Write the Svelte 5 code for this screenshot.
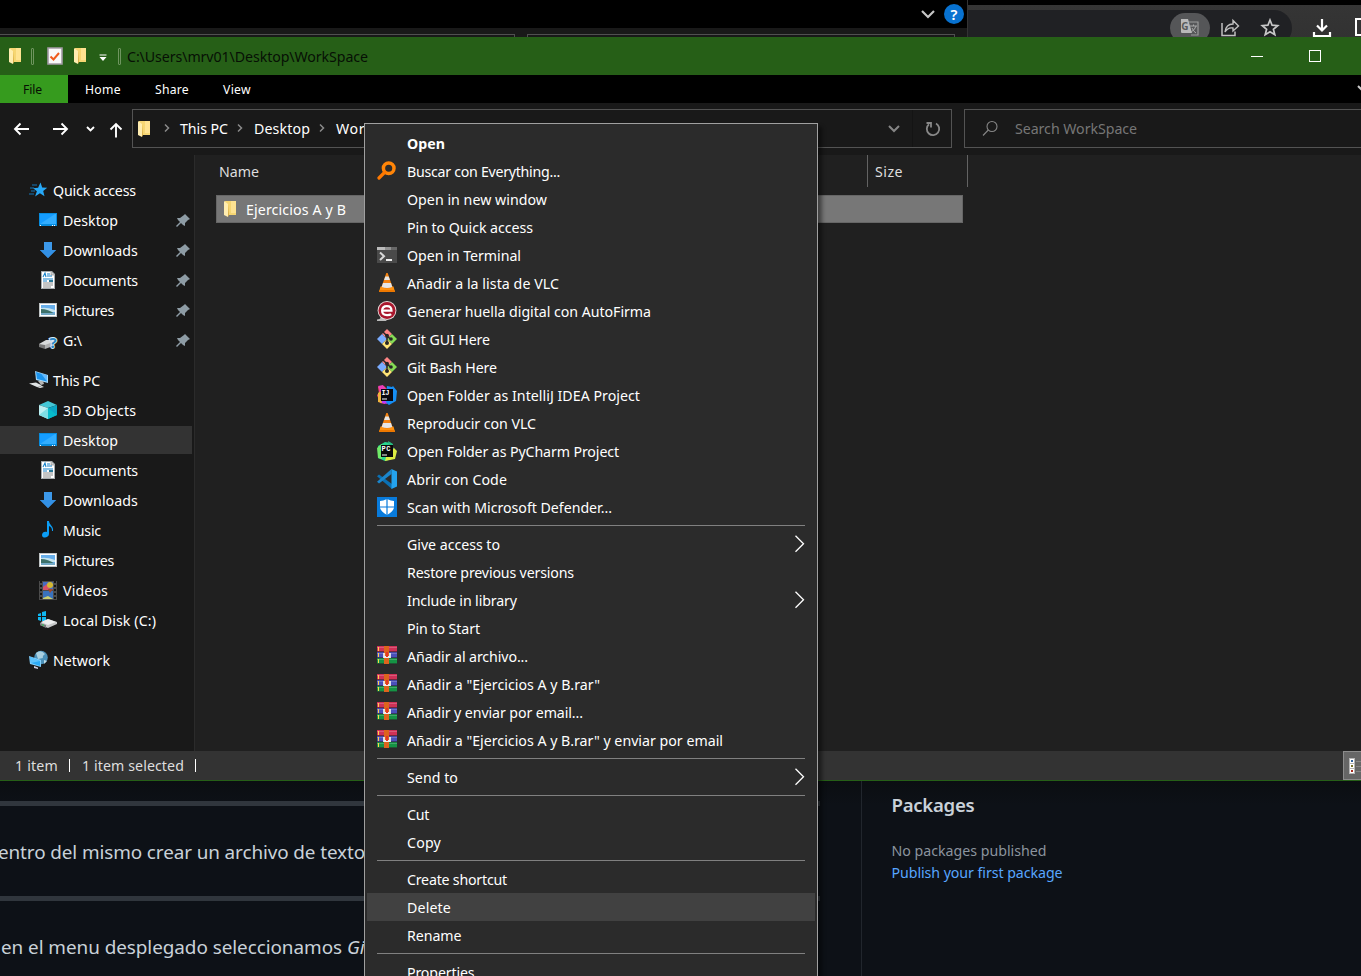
<script>
  // Spreads the letters of a label evenly over the given width.
  function fit(node, width) {
    const n = node.textContent.length;
    const natural = node.getBoundingClientRect().width;
    if (width && n > 1) node.style.letterSpacing = `${(width - natural) / n}px`;
  }

  const icons = {
    folder: `<path d="M3 1h11v14H3z" fill="#f6d673"/><path d="M9 1h5v12H9z" fill="#ffe391"/><path d="M2 1l4 3v13l-4-2z" fill="#ffedb0"/><path d="M6 4l1 11-1 2z" fill="#d8ad45"/>`,
    star: `<path d="M11.500 2.500l1.700 5 5 .2-4 3.300 1.300 5.300-4.600-3L6.100 16.500l1.800-5.200-3.800-3 5 -.5z" fill="#27a8f6"/><path d="M3 5h5M1 8h4M2 11h4M0 14h5" stroke="#1477b8" stroke-width="1"/>`,
    desktop: `<path d="M1 3h18v13H1z" fill="#078bdd"/><path d="M2 4h16v10H2z" fill="#159cff"/><path d="M2 14L17 4h1v10z" fill="#32adff"/><path d="M2 15.500h1M14 15.500h1M16 15.500h1" stroke="#fff"/>`,
    down: `<path d="M6 2h8v8h4l-8 8-8-8h4z" fill="#3c98e8"/><path d="M2 10h16l-8 8z" fill="#3290e5"/>`,
    doc: `<path d="M3 1h11l3 3v15H3z" fill="#a7abad"/><path d="M4 2h9l3 3v13H4z" fill="#fff"/><path d="M13 2v3h3" fill="#ccc" stroke="#888" stroke-width=".6"/><path d="M5 7l2-4 1 4M9 4h3M9 6h5M5 9h10M5 11h4M11 11h4" stroke="#1682ca" stroke-width="1.1" fill="none"/><path d="M5 13h10M5 15h10M5 17h8" stroke="#8b8b8b"/><path d="M11 10h4v2h-4z" fill="#287797"/>`,
    picture: `<path d="M1 3h18v14H1z" fill="#bfc3c4"/><path d="M2 4h16v12H2z" fill="#fff"/><path d="M3 5h14v10H3z" fill="#67aeea"/><path d="M3 8q6-1 14 2v2H3z" fill="#c5e4ef"/><path d="M3 9q7 0 14 5H3z" fill="#3d716a"/><path d="M3 13h14v2H3z" fill="#73a9c6"/>`,
    drive: `<path d="M1 14l7-4h8l-1 4-7 4-7-2z" fill="#d8dada"/><path d="M1 14l6 1v4l-6-2z" fill="#777"/><path d="M7 15l8-3v4l-8 3z" fill="#b0b1b1"/><text x="11.500" y="18" font-size="15" font-weight="700" fill="#2b86c4" stroke="#d7ecfa" stroke-width="1.800" paint-order="stroke" font-family="Noto Sans">?</text>`,
    pc: `<path d="M6 1l13 4v8L7 10z" fill="#a5d8f9"/><path d="M7 2l11 3.500v6L8 9z" fill="#1c94ed"/><path d="M12 3.500l6 2v6z" fill="#63baff"/><path d="M9 11h5l1 3-3 1z" fill="#b5b5b5"/><path d="M0 13.500l7-1 6 3-5 1.500zM8 17l5-1 2 1-4 1z" fill="#dfe3e4"/>`,
    cube: `<path d="M1 5l9-4 9 4-9 3z" fill="#44c7d6"/><path d="M1 5l9 3v11l-9-4z" fill="#bceff2"/><path d="M10 8l9-3v10l-9 4z" fill="#0ba6c5"/><path d="M10 8l9 7-9 4z" fill="#07bbca"/><path d="M1 15l9-7v11z" fill="#7edee4"/>`,
    music: `<path d="M9 1h2c0 4 5 5 4 10h-1c0-3-1-4-3-5v8c0 4-7 5-7 1 0-3 3-4 5-3z" fill="#0b9df5"/>`,
    video: `<path d="M1 1h18v19H1z" fill="#4c4c4c"/><path d="M3 1v19M17 1v19" stroke="#151515" stroke-width="2" stroke-dasharray="2 2"/><path d="M5 2h10v8H5z" fill="#456cc1"/><path d="M5 11h10v8H5z" fill="#3972bd"/><path d="M5 7l4-3 3 5v1H5z" fill="#d55268"/><circle cx="12" cy="5" r="3" fill="#d5b831"/><path d="M10 9h5l-3 4z" fill="#a4472a"/><path d="M5 18l5-2 5 3H5z" fill="#c9ce71"/>`,
    disk: `<path d="M0 4l3-1v3H0zM4 2l4-1v5H4zM0 7h3v4l-3-1zM4 7h4v4H4z" fill="#10b8f2"/><path d="M2 13l8-4 9 3v2l-9 4-8-3z" fill="#c5c7c8"/><path d="M3 12l7-3 8 3-8 3z" fill="#edeeef"/><path d="M2 13l6 2v3l-6-3z" fill="#777b7d"/><path d="M4 15h2" stroke="#2dd258"/>`,
    network: `<circle cx="12" cy="7.500" r="6.800" fill="#4b90b8"/><path d="M7 3q5-4 9 1-3 2-2 4l-5 1z" fill="#a8cfe0"/><path d="M15 10l3 1-3 3z" fill="#bbdae7"/><path d="M0 6l12 4v7L1 14z" fill="#80cffd"/><path d="M1 7l10 4v5L2 13z" fill="#2babf7"/><path d="M1 7l10 4-9 2z" fill="#5fc2fb"/><path d="M5 16l4 1.500v1.500l-4-1z" fill="#ccd"/>`,
    pin: `<path d="M9 1l5 5-2 1-3 3 0 3-2-1-2-2-4 4-1-1 4-4-2-2-1-2h3l4-3z" fill="#8e9ca5"/>`,
    search: `<circle cx="11.700" cy="7.200" r="5.300" fill="none" stroke="#ff8508" stroke-width="3.500"/><path d="M8 11l-6 6" stroke="#ff7900" stroke-width="3.200" stroke-linecap="round"/>`,
    terminal: `<path d="M0 2h20v16H0z" fill="#4a4a4a"/><path d="M0 2h20v3H0z" fill="#919191"/><path d="M0 2h8v3H0z" fill="#bbb"/><path d="M14 2h6v3h-6z" fill="#686868"/><path d="M3 7.500l4 3.700L3 15" fill="none" stroke="#d7d7d7" stroke-width="2"/><path d="M9 15h6" stroke="#eee" stroke-width="2"/>`,
    vlc: `<path d="M3.500 13.500h13l1.500 5.500H2z" fill="#ff9210"/><path d="M9.300 0h1.400l4.800 14q-5.500 3-11 0z" fill="#f58310"/><path d="M8.300 3.500h3.400l1.200 3.500H7.100zM6 10h8l1.300 4Q10 16 4.700 14z" fill="#e6e6e6"/><path d="M2.500 17h15l.5 2H2z" fill="#ed7800"/>`,
    firma: `<path d="M0 20v-1.500q3 0 5-3l5 4.500z" fill="#bbb"/><circle cx="10" cy="9.500" r="9.400" fill="#e9dcdc"/><circle cx="10" cy="9.500" r="8.500" fill="#a9172d"/><path d="M5.500 9.700h9q0-4.500-4.600-4.500-4.800 0-4.800 4.600 0 4.300 5 4.300 3 0 4-1" fill="none" stroke="#fff" stroke-width="2.200"/>`,
    git: `<path d="M10 0l5 5-5 5-5-5z" fill="#ff8585"/><path d="M5 5l5 5-5 5-5-5z" fill="#7aacff"/><path d="M15 5l5 5-5 5-5-5z" fill="#86dc55"/><path d="M10 10l5 5-5 5-5-5z" fill="#ffe477"/><path d="M5.500 2.500l4 4M10 7v7M10 7l4 3.500" stroke="#262626" stroke-width="1.500"/><g fill="#262626"><circle cx="10" cy="6.800" r="2"/><circle cx="14" cy="10" r="1.800"/><circle cx="10" cy="14" r="2"/></g>`,
    idea: `<path d="M1 2l6-1 4 4-3 14-5-1-3-8 2-2z" fill="#f74474"/><path d="M1 8l4-3v13l-4-1z" fill="#f0b43d"/><path d="M1 1l5-1 3 5-5 3z" fill="#ec3eb9"/><path d="M10 1l5 1 1-1 4 5-1 10-7 4-4-3z" fill="#168ef5"/><path d="M4 12l3-1 3 8-5-1z" fill="#bb3bf6"/><path d="M4 4h12v12H4z" fill="#090810"/><text x="4.500" y="10" font-size="7" font-weight="700" textLength="8" fill="#fff" font-family="Liberation Mono">IJ</text><path d="M5 14h5" stroke="#fff"/>`,
    pycharm: `<path d="M1 5l7-4 6 1 4 8-3 8-7 2-7-3z" fill="#29d58f"/><path d="M13 12l4-5 3 3-2 8-10 2 1-4z" fill="#dcec42"/><path d="M0 7l5-4v15l-4-1z" fill="#70eb68"/><path d="M11 0l5 3 0 5-4-3z" fill="#27bd83"/><path d="M4 4h12v12H4z" fill="#090a0b"/><text x="4.500" y="10" font-size="7" font-weight="700" textLength="9" fill="#fff" font-family="Liberation Mono">PC</text><path d="M5 14h5" stroke="#fff"/>`,
    code: `<path d="M2 5.500L15 15v5L0 7.300z" fill="#0a70b4"/><path d="M14.500 0v5L2 14.500l-2-1.800z" fill="#1b86cc"/><path d="M14.500 0L20 2.500v15L14.500 20z" fill="#24a3ee"/>`,
    defender: `<path d="M0 0h20v20H0z" fill="#087bdc"/><path d="M10 2q4 2 7 2v6q0 4-7 8-7-4-7-8V4q3 0 7-2z" fill="#fff"/><path d="M10 2v16M3 10h14" stroke="#087bdc" stroke-width="1.200"/>`,
    rar: `<path d="M0 0h20v6H0z" fill="#cf3157"/><path d="M0 6h20v6H0z" fill="#4a50ba"/><path d="M0 12h20v6H0z" fill="#159344"/><path d="M0 1.500h20M0 7.500h20M0 13.500h20" stroke="#fff" opacity=".2"/><path d="M0 5.700h20M0 11.700h20M0 17.700h20" stroke="#2b2329" stroke-width=".7"/><path d="M7 0h5v18H7z" fill="#dd641d"/><path d="M1.500 1v4M1.500 7v4M1.500 13v4" stroke="#ffd24b"/><path d="M7 7v4h6V7" fill="none" stroke="#eee" stroke-width="1.800"/><path d="M10 6v5" stroke="#e53627" stroke-width="2"/>`,
  };

  const sep = { sep: true };
  const menu = [
    { t: 'Open', w: 38, bold: true },
    { t: 'Buscar con Everything...', w: 153, i: 'search' },
    { t: 'Open in new window', w: 140 },
    { t: 'Pin to Quick access', w: 126 },
    { t: 'Open in Terminal', w: 114, i: 'terminal' },
    { t: 'Añadir a la lista de VLC', w: 152, i: 'vlc' },
    { t: 'Generar huella digital con AutoFirma', w: 244, i: 'firma' },
    { t: 'Git GUI Here', w: 83, i: 'git' },
    { t: 'Git Bash Here', w: 90, i: 'git' },
    { t: 'Open Folder as IntelliJ IDEA Project', w: 233, i: 'idea' },
    { t: 'Reproducir con VLC', w: 129, i: 'vlc' },
    { t: 'Open Folder as PyCharm Project', w: 212, i: 'pycharm' },
    { t: 'Abrir con Code', w: 100, i: 'code' },
    { t: 'Scan with Microsoft Defender...', w: 205, i: 'defender' },
    sep,
    { t: 'Give access to', w: 93, sub: true },
    { t: 'Restore previous versions', w: 167 },
    { t: 'Include in library', w: 110, sub: true },
    { t: 'Pin to Start', w: 73 },
    { t: 'Añadir al archivo...', w: 121, i: 'rar' },
    { t: 'Añadir a "Ejercicios A y B.rar"', w: 193, i: 'rar' },
    { t: 'Añadir y enviar por email...', w: 176, i: 'rar' },
    { t: 'Añadir a "Ejercicios A y B.rar" y enviar por email', w: 316, i: 'rar' },
    sep,
    { t: 'Send to', w: 51, sub: true },
    sep,
    { t: 'Cut', w: 22 },
    { t: 'Copy', w: 34 },
    sep,
    { t: 'Create shortcut', w: 100 },
    { t: 'Delete', w: 44, hot: true },
    { t: 'Rename', w: 54.5 },
    sep,
    { t: 'Properties', w: 67.5 },
  ];

  const tree = [
    { t: 'Quick access', w: 83, i: 'star', root: true },
    { t: 'Desktop', w: 55, i: 'desktop', pin: true },
    { t: 'Downloads', w: 75, i: 'down', pin: true },
    { t: 'Documents', w: 75, i: 'doc', pin: true },
    { t: 'Pictures', w: 51, i: 'picture', pin: true },
    { t: 'G:\\', w: 19, i: 'drive', pin: true },
    { t: 'This PC', w: 47, i: 'pc', root: true },
    { t: '3D Objects', w: 73, i: 'cube' },
    { t: 'Desktop', w: 55, i: 'desktop', on: true },
    { t: 'Documents', w: 75, i: 'doc' },
    { t: 'Downloads', w: 75, i: 'down' },
    { t: 'Music', w: 38, i: 'music' },
    { t: 'Pictures', w: 51, i: 'picture' },
    { t: 'Videos', w: 45, i: 'video' },
    { t: 'Local Disk (C:)', w: 93, i: 'disk' },
    { t: 'Network', w: 57, i: 'network', root: true },
  ];
</script>

{#snippet icon(name, size = 20)}
  <svg class="icon" width={size} height={size} viewBox="0 0 20 20">{@html icons[name]}</svg>
{/snippet}

{#snippet folder()}
  <svg class="icon" width="16" height="18" viewBox="0 0 16 18">{@html icons.folder}</svg>
{/snippet}

{#snippet chevron()}
  <svg class="crumb-sep" width="8" height="12" viewBox="0 0 8 12"><path d="M2 1.5L5.5 5 2 8.5" fill="none" stroke="#8a8a8a" stroke-width="1.5" /></svg>
{/snippet}

<div class="screen">
  <div class="back-window">
    <div class="back-ribbon">
      <svg width="16" height="12" viewBox="0 0 16 12"><path d="M2 2l6 6 6-6" fill="none" stroke="#c6c6c6" stroke-width="2.2" /></svg>
      <span class="help">?</span>
    </div>
    <div class="back-fields"><i></i><i></i></div>
  </div>

  <div class="browser">
    <div class="omnibox">
      <span class="translate">
        <svg width="20" height="20" viewBox="0 0 20 20"><path d="M7 4h11v13h-7" fill="none" stroke="#9b9b9b" stroke-width="1.2" /><path d="M1 1h7l4 14H2q-1 0-1-1z" fill="#b9b9b9" /><text x="1.3" y="12" font-size="10" font-weight="700" fill="#58595b" font-family="Noto Sans">G</text><path d="M10 8h7M13.5 6.5V8M16 8q-1 4-5 6M12 10q2 4 4 5" fill="none" stroke="#a9a9a9" /></svg>
      </span>
      <svg width="20" height="20" viewBox="0 0 20 20"><path d="M2 5v12.500h13v-4" fill="none" stroke="#c0c0c0" stroke-width="1.5" /><path d="M5 14q1-8 8-8V2.500L18.500 8 13 13V10q-5-1-8 4z" fill="none" stroke="#c0c0c0" stroke-width="1.4" /></svg>
      <svg width="20" height="20" viewBox="0 0 20 20"><path d="M10 2l2.1 5.2 5.6.5-4.3 3.6 1.4 5.4L10 13.7l-4.8 3 1.4-5.4-4.3-3.6 5.6-.5z" fill="none" stroke="#c8c8c8" stroke-width="1.7" /></svg>
    </div>
    <svg class="dl" width="20" height="20" viewBox="0 0 20 20"><path d="M10 1v11M5 7.500l5 5 5-5M2 14v4h16v-4" fill="none" stroke="#fff" stroke-width="2.2" /></svg>
    <span class="panel-icon"></span>
  </div>

  <div class="page">
    <div class="readme">
      <hr />
      <p><span use:fit={367}>entro del mismo crear un archivo de texto</span></p>
      <hr />
      <p class="second"><span use:fit={341}>en el menu desplegado seleccionamos</span><em>Git</em></p>
    </div>
    <aside>
      <h2><span use:fit={83}>Packages</span></h2>
      <div><span use:fit={155}>No packages published</span></div>
      <div class="link"><span use:fit={171}>Publish your first package</span></div>
    </aside>
  </div>

  <div class="explorer">
    <header>
      {@render folder()}
      <i class="bar b1"></i>
      <svg class="check" width="16" height="18" viewBox="0 0 16 18"><path d="M1 1h14v16H1z" fill="#f8f8f8" stroke="#a29aa5" stroke-width="1.6" /><path d="M3.5 9.5l3 3L12 6" fill="none" stroke="#ef5a1b" stroke-width="2" /></svg>
      <span class="f2">{@render folder()}</span>
      <svg class="drop" width="8" height="8" viewBox="0 0 8 8"><path d="M.5 1h7" stroke="#fff" /><path d="M.5 3h7L4 7z" fill="#fff" /></svg>
      <i class="bar b2"></i>
      <span class="path" use:fit={241}>C:\Users\mrv01\Desktop\WorkSpace</span>
      <i class="min"></i>
      <i class="max"></i>
    </header>
    <nav class="ribbon">
      <span class="file"><b use:fit={19}>File</b></span>
      <span class="home"><b use:fit={36}>Home</b></span>
      <span class="share"><b use:fit={34}>Share</b></span>
      <span class="view"><b use:fit={28}>View</b></span>
      <svg class="expand" width="4" height="8" viewBox="0 0 4 8"><path d="M1 1l5 5" stroke="#ccc" stroke-width="2" /></svg>
    </nav>
    <div class="nav">
      <div class="arrows">
        <svg width="132" height="40" viewBox="0 0 132 40" fill="none" stroke="#fff" stroke-width="1.9">
          <path d="M29 20H15M20.5 14.5L15 20l5.500 5.500M53 20h14M61.500 14.500L67 20l-5.500 5.500" />
          <path d="M87 18l3.500 3.500L94 18" /><path d="M116 28.500V15M110.500 20.500L116 15l5.500 5.500" />
        </svg>
      </div>
      <div class="address">
        {@render folder()}
        <span class="s1">{@render chevron()}</span><span class="c1" use:fit={48}>This PC</span>
        <span class="s2">{@render chevron()}</span><span class="c2" use:fit={56}>Desktop</span>
        <span class="s2">{@render chevron()}</span><span class="c3" use:fit={80}>WorkSpace</span>
        <svg class="history" width="14" height="10" viewBox="0 0 14 10"><path d="M2 2l5 5 5-5" fill="none" stroke="#858585" stroke-width="2" /></svg>
        <span class="refresh"><svg width="16" height="18" viewBox="0 0 16 18"><path d="M11 3.500A6.200 6.200 0 1 1 4 4.200M1.500 3h4.500v4.500" fill="none" stroke="#888" stroke-width="1.800" /></svg></span>
      </div>
      <div class="find">
        <svg width="18" height="18" viewBox="0 0 18 18"><circle cx="11" cy="6.500" r="5" fill="none" stroke="#868686" stroke-width="1.100" /><path d="M7.300 10L2 15.500" stroke="#868686" stroke-width="1.100" /></svg>
        <span use:fit={122}>Search WorkSpace</span>
      </div>
    </div>
    <div class="body">
      <div class="tree">
        {#each tree as r, k}
          <div class="node" class:root={r.root} class:on={r.on} class:gap={r.root && k > 0}>
            {@render icon(r.i)}
            <span use:fit={r.w}>{r.t}</span>
            {#if r.pin}<svg class="pin" width="14" height="14" viewBox="0 0 14 14">{@html icons.pin}</svg>{/if}
          </div>
        {/each}
      </div>
      <div class="files">
        <div class="cols">
          <span class="name"><b use:fit={40}>Name</b></span>
          <span class="size"><b use:fit={28}>Size</b></span>
        </div>
        <div class="row">{@render folder()}<span use:fit={100}>Ejercicios A y B</span></div>
      </div>
    </div>
    <footer>
      <span use:fit={43}>1 item</span><i></i><span class="sel" use:fit={102}>1 item selected</span><i></i>
      <div class="details">
        <svg width="17" height="28" viewBox="0 0 17 28">
          <path d="M5 6h6v16H5z" fill="#b5b5b5" />
          <path d="M6 7h4v4H6zM6 12h4v4H6zM6 17h4v4H6z" fill="#fff" />
          <path d="M7 8h2v2H7z" fill="#31619c" /><path d="M7 13h2v2H7z" fill="#77702a" /><path d="M7 18h2v2H7z" fill="#a82b20" />
          <path d="M12 9.500h5M12 14.500h5M12 19.500h5" stroke="#858585" />
        </svg>
      </div>
    </footer>
  </div>

  <div class="menu">
    {#each menu as m}
      {#if m.sep}
        <div class="sep"></div>
      {:else}
        <div class="item" class:hot={m.hot} class:bold={m.bold}>
          <span class="slot" class:raised={m.i === 'rar'}>{#if m.i}{@render icon(m.i)}{/if}</span>
          <span class="label" use:fit={m.w}>{m.t}</span>
          {#if m.sub}<svg class="sub" width="12" height="18" viewBox="0 0 12 18"><path d="M1.500 .8L9.500 8.800l-8 8" fill="none" stroke="#fff" stroke-width="1.300" /></svg>{/if}
        </div>
      {/if}
    {/each}
  </div>
</div>

<style>
  :global(body) { margin: 0; background: #0d1117; overflow: hidden; }
  .screen { position: relative; width: 1361px; height: 976px; overflow: hidden; background: #0d1117; font: 14.2px/20px "Noto Sans", "Open Sans", sans-serif; color: #fff; }
  .screen * { box-sizing: border-box; }
  span, b { white-space: pre; font-weight: inherit; }
  svg { display: block; flex: none; }
  b { display: inline-block; }

  .back-window { position: absolute; left: 0; top: 0; width: 968px; height: 37px; background: #191919; border-right: 1px solid #333; }
  .back-ribbon { height: 28px; background: #000; display: flex; justify-content: flex-end; align-items: center; gap: 8px; padding-right: 3px; }
  .back-ribbon svg { margin-top: 2px; }
  .help { width: 20px; height: 20px; border-radius: 50%; background: #0872d0; text-align: center; line-height: 20px; font-size: 15px; font-weight: 600; }
  .back-fields { display: flex; gap: 12px; padding-top: 6px; }
  .back-fields i { height: 5px; width: 515px; border: 1px solid #505050; border-width: 1px 1px 0 0; }
  .back-fields i + i { width: 428px; border-left-width: 1px; }

  .browser { position: absolute; left: 968px; top: 0; width: 393px; height: 37px; border-top: 5px solid #000; background: linear-gradient(#353535, #323232); display: flex; overflow: hidden; }
  .omnibox { width: 324px; height: 36px; margin-top: 5px; border-radius: 0 18px 18px 0; background: #202124; display: flex; justify-content: flex-end; padding: 8px 12px 0 0; gap: 20px; flex: none; }
  .translate { width: 40px; height: 30px; margin: -5px -10px 0 0; border-radius: 15px; background: #555658; padding: 5px 0 0 10px; }
  .dl { margin: 13px 0 0 20px; }
  .panel-icon { margin: 13px 0 0 23px; width: 18px; height: 18px; border: 2px solid #fff; flex: none; }

  .page { position: absolute; left: 0; top: 781px; width: 1361px; height: 195px; display: flex; background: linear-gradient(#0b0e12, #0d1117 24px); }
  .readme { width: 862px; border-right: 1px solid #21262d; padding-top: 20px; font-size: 18.9px; line-height: 30px; color: #c9d1d9; flex: none; overflow: hidden; }
  .readme hr { width: 820px; height: 5px; border: 0; margin: 0; background: #30363d; }
  .readme p { margin: 0; height: 90px; padding: 31px 0 0 0; display: flex; }
  .readme p:first-of-type { margin-left: -2px; }
  .readme .second { padding-left: 1px; }
  .readme em { margin-left: 5px; }
  aside { padding: 10px 0 0 29.5px; font-size: 14.2px; line-height: 22px; color: #8b949e; }
  aside h2 { margin: 0 0 21px; font-size: 18.6px; line-height: 28px; font-weight: 600; color: #c9d1d9; }
  .link { color: #58a6ff; }

  .explorer { position: absolute; left: 0; top: 37px; width: 1361px; height: 744px; background: #191919; border-bottom: 1px solid #265f17; }
  header { height: 38px; background: #265f17; display: flex; align-items: center; padding-left: 7px; color: #071005; }
  .bar { width: 3px; height: 17px; border: 1px solid #6f955f; border-radius: 1px; }
  .b1 { margin-left: 8px; }
  .check { margin-left: 13px; }
  .f2 { margin-left: 9px; }
  .drop { margin: 4px 0 0 11px; }
  .b2 { margin-left: 11px; }
  .path { margin-left: 6px; padding-top: 2px; }
  .min { margin-left: auto; width: 12px; height: 1px; background: #fff; }
  .max { margin: 0 40px 0 46px; width: 12px; height: 12px; border: 1px solid #fff; }
  .ribbon { height: 28px; background: #000; display: flex; line-height: 30px; font-size: 12.2px; overflow: hidden; }
  .file { width: 68px; background: #369b1e; color: #061003; padding-left: 23px; }
  .home { padding-left: 17px; width: 86px; }
  .share { width: 69px; padding-left: 1px; }
  .expand { margin: 10px 0 0 auto; }
  .nav { height: 52px; display: flex; padding-top: 6px; }
  .arrows { width: 132px; flex: none; }
  .address { width: 820px; height: 39px; border: 1px solid #535353; display: flex; align-items: center; padding-left: 3px; flex: none; }
  .s1 { margin-left: 11px; }
  .c1 { margin-left: 9px; }
  .s2 { margin-left: 8px; }
  .c2, .c3 { margin-left: 10px; }
  .history { margin: 1px -1px 0 auto; }
  .refresh { margin-left: 12px; border-left: 1px solid #141414; padding: 10px 10px 9px 12px; }
  .find { margin-left: 12px; width: 420px; height: 39px; border: 1px solid #535353; border-right: 0; display: flex; align-items: center; gap: 16px; padding-left: 16px; color: #767676; flex: none; }
  .nav + .body { height: 596px; display: flex; }
  .tree { width: 195px; border-right: 1px solid #2b2b2b; padding-top: 21px; flex: none; }
  .node { height: 28px; margin-bottom: 2px; width: 192px; padding-left: 38px; display: flex; align-items: center; gap: 5px; }
  .node span { padding-top: 2px; }
  .node.root { padding-left: 29px; gap: 4px; }
  .node.gap { margin-top: 12px; }
  .node.on { background: #333; }
  .pin { margin: 0 2px 0 auto; }
  .files { flex: 1; background: #202020; padding-left: 21px; }
  .cols { height: 32px; display: flex; color: #dedede; line-height: 34px; }
  .name { width: 652px; border-right: 1px solid #636363; padding-left: 3px; }
  .size { width: 100px; border-right: 1px solid #636363; padding-left: 7px; }
  .row { margin-top: 8px; width: 747px; height: 28px; background: #777; border: 1px solid #666; display: flex; align-items: center; gap: 8px; padding-left: 5px; }
  .row span { padding-top: 2px; }
  footer { height: 29px; background: #333; display: flex; align-items: center; padding-left: 15px; color: #dedede; }
  footer i { width: 1px; height: 13px; background: #fff; margin: 0 12px 0 11px; }
  .details { margin-left: auto; width: 18px; height: 29px; background: #666; border: 1px solid #8c8c8c; border-width: 1px 0 1px 1px; overflow: hidden; }

  .menu { position: absolute; left: 364px; top: 123px; width: 454px; height: 870px; background: #2b2b2b; border: 1px solid #a0a0a0; padding: 5px 2px; box-shadow: 4px 4px 4px rgba(0, 0, 0, .45); }
  .item { height: 28px; display: flex; align-items: center; padding: 0 9px 0 10px; }
  .slot { width: 30px; height: 20px; flex: none; }
  .raised { height: 20px; }
  .label { padding-top: 2px; }
  .bold { font-weight: 700; }
  .hot { background: #414141; }
  .sub { margin: 0 0 0 auto; }
  .sep { height: 9px; margin: 0 10px; border-bottom: 4px solid transparent; background: linear-gradient(transparent 4px, #808080 4px) padding-box; }
</style>
